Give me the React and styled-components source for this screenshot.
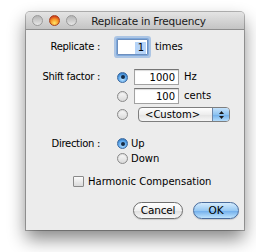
import React from 'react'
import styled, { createGlobalStyle, css } from 'styled-components'

const GlobalStyle = createGlobalStyle`
  html, body {
    margin: 0;
    background: #ffffff;
    font-family: "DejaVu Sans", "Noto Sans", sans-serif;
    font-size: 10px;
    color: #000;
  }
`

const Page = styled.div`
  width: 256px;
  height: 252px;
  padding: 12px 0 0 26px;
  box-sizing: border-box;
  overflow: hidden;
`

const Window = styled.div`
  width: 218px;
  height: 218px;
  background: #ececec;
  border-radius: 4px 4px 0 0;
  box-shadow: 0 0 0 1px rgba(0, 0, 0, 0.28), 0 9px 18px rgba(0, 0, 0, 0.48);
  display: flex;
  flex-direction: column;
`

const TitleBar = styled.div`
  height: 17px;
  border-bottom: 1px solid #8e8e8e;
  border-radius: 4px 4px 0 0;
  background: linear-gradient(#e4e4e4, #c4c4c4);
  display: flex;
  align-items: center;
  padding-left: 6px;
`

const Light = styled.span`
  width: 11px;
  height: 11px;
  border-radius: 50%;
  margin-right: 6px;
  box-sizing: border-box;
  border: 1px solid #9a9a9a;
  background: linear-gradient(#b4b4b4, #e6e6e6);
  ${(p) => p.$active && css`
    border-color: #a8401c;
    background: radial-gradient(circle at 50% 78%, #ffe66a 0, #f79a2a 45%, #d2401a 80%);
  `}
`

const Title = styled.div`
  flex: 1;
  text-align: center;
  font-size: 10.5px;
  letter-spacing: -0.2px;
  color: #1a1a1a;
  padding-right: 30px;
`

const Content = styled.div`
  display: flex;
  flex-direction: column;
  padding-top: 9px;
`

const Row = styled.div`
  display: flex;
  align-items: flex-start;
  margin-top: ${(p) => p.$top || 0}px;
`

const Label = styled.div`
  width: 74px;
  text-align: right;
  line-height: ${(p) => p.$lh || 16}px;
  letter-spacing: -0.3px;
  margin-right: 17px;
  white-space: nowrap;
`

const Options = styled.div`
  display: flex;
  flex-direction: column;
  gap: ${(p) => p.$gap || 0}px;
`

const Option = styled.div`
  display: flex;
  align-items: center;
  height: ${(p) => p.$h || 16}px;
`

const Radio = styled.span`
  width: 11px;
  height: 11px;
  border-radius: 50%;
  box-sizing: border-box;
  border: 1px solid #8a8a8a;
  background: linear-gradient(#fafafa, #d9d9d9);
  box-shadow: inset 0 1px 1px rgba(0, 0, 0, 0.12);
  margin-right: ${(p) => p.$gap || 6}px;
  display: flex;
  align-items: center;
  justify-content: center;
  flex-shrink: 0;
  ${(p) => p.$on && css`
    border-color: #3c6aa0;
    background: radial-gradient(circle at 50% 70%, #b8e0ff 0, #5aa6ec 55%, #2e78c8 100%);
    &::after {
      content: '';
      width: 4px;
      height: 4px;
      border-radius: 50%;
      background: #132a44;
    }
  `}
`

const Field = styled.div`
  width: ${(p) => p.$w}px;
  height: 16px;
  box-sizing: border-box;
  background: #fff;
  border: 1px solid #a2a2a2;
  border-top-color: #757575;
  box-shadow: inset 0 1px 1px rgba(0, 0, 0, 0.15);
  text-align: right;
  padding-right: 3px;
  line-height: 15px;
  margin-right: 5px;
`

const FocusField = styled(Field)`
  border-color: #6e8fbd;
  border-radius: 1px;
  box-shadow: 0 0 0 1px #7fa9dc, 0 0 0 3px rgba(120, 165, 222, 0.55);
  margin-right: 7px;
  padding-right: 1px;
`

const Selected = styled.span`
  background: #b6d4f8;
  padding: 0 2px 1px 3px;
`

const Unit = styled.span`
  line-height: 16px;
`

const Popup = styled.div`
  width: 92px;
  height: 15px;
  box-sizing: border-box;
  margin-left: 4px;
  border: 1px solid #7e7e7e;
  border-radius: 4px;
  background: linear-gradient(#ffffff, #ededed 50%, #e2e2e2 51%, #f6f6f6);
  display: flex;
  overflow: hidden;
`

const PopupText = styled.div`
  flex: 1;
  padding-left: 6px;
  line-height: 13px;
`

const PopupArrows = styled.div`
  width: 16px;
  border-left: 1px solid #6d86a8;
  background: linear-gradient(#c4e2fc, #8ec3f0 50%, #6eaeea 51%, #b4dcfb);
  display: flex;
  align-items: center;
  justify-content: center;
`

const CheckRow = styled.div`
  display: flex;
  align-items: center;
  margin: 9px 0 0 47px;
  height: 12px;
`

const Box = styled.span`
  width: 11px;
  height: 11px;
  box-sizing: border-box;
  border: 1px solid #8a8a8a;
  border-radius: 1px;
  background: linear-gradient(#fbfbfb, #dadada);
  margin-right: 4px;
`

const Buttons = styled.div`
  display: flex;
  justify-content: flex-end;
  gap: 10px;
  margin-top: 15px;
  padding-right: 5px;
`

const Button = styled.div`
  width: ${(p) => p.$w}px;
  height: 17px;
  box-sizing: border-box;
  border-radius: 9px;
  border: 1px solid #6f6f6f;
  background: linear-gradient(#ffffff, #f0f0f0 50%, #dedede 51%, #f7f7f7);
  box-shadow: 0 1px 1px rgba(0, 0, 0, 0.15);
  text-align: center;
  line-height: 15px;
  font-size: 10.5px;
  letter-spacing: -0.2px;
  color: #000;
  ${(p) => p.$primary && css`
    border-color: #4a6c9c;
    background: linear-gradient(#d4ebfd, #98c9f3 50%, #6eaceb 51%, #bfe4fd);
  `}
`

const Arrows = () => (
  <svg width="7" height="10" viewBox="0 0 7 10">
    <path d="M3.5 1 L6 4 L1 4 Z" fill="#1a1a1a" />
    <path d="M3.5 9 L6 6 L1 6 Z" fill="#1a1a1a" />
  </svg>
)

export default function App() {
  return (
    <>
      <GlobalStyle />
      <Page>
        <Window>
          <TitleBar>
            <Light />
            <Light $active />
            <Light />
            <Title>Replicate in Frequency</Title>
          </TitleBar>
          <Content>
            <Row>
              <Label $lh={16}>Replicate :</Label>
              <Option>
                <FocusField $w={31}><Selected>1</Selected></FocusField>
                <Unit>times</Unit>
              </Option>
            </Row>

            <Row $top={14}>
              <Label>Shift factor :</Label>
              <Options $gap={3}>
                <Option>
                  <Radio $on />
                  <Field $w={45}>1000</Field>
                  <Unit>Hz</Unit>
                </Option>
                <Option>
                  <Radio />
                  <Field $w={45}>100</Field>
                  <Unit>cents</Unit>
                </Option>
                <Option $h={15}>
                  <Radio />
                  <Popup>
                    <PopupText>&lt;Custom&gt;</PopupText>
                    <PopupArrows><Arrows /></PopupArrows>
                  </Popup>
                </Option>
              </Options>
            </Row>

            <Row $top={14}>
              <Label $lh={15}>Direction :</Label>
              <Options>
                <Option $h={15}>
                  <Radio $on $gap={3} />
                  <span>Up</span>
                </Option>
                <Option $h={15}>
                  <Radio $gap={3} />
                  <span>Down</span>
                </Option>
              </Options>
            </Row>

            <CheckRow>
              <Box />
              <span>Harmonic Compensation</span>
            </CheckRow>

            <Buttons>
              <Button $w={50}>Cancel</Button>
              <Button $w={46} $primary>OK</Button>
            </Buttons>
          </Content>
        </Window>
      </Page>
    </>
  )
}
